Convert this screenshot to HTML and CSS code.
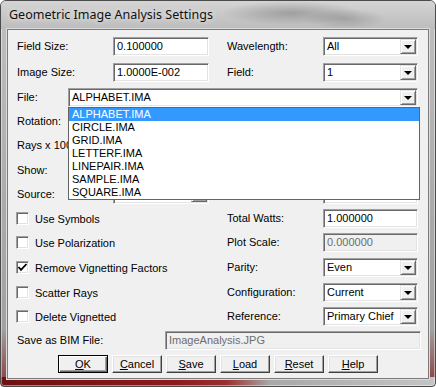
FILE: index.html
```html
<!DOCTYPE html>
<html lang="en">
<head>
    <meta charset="UTF-8">
    <title>Geometric Image Analysis Settings</title>
    <link rel="stylesheet" href="styles.css">
</head>
<body>
    <div class="window">
        <div class="titlebar">Geometric Image Analysis Settings</div>
        <div class="client">
            <div class="form">
                <div class="row">
                    <span class="lbl">Field Size:</span>
                    <div class="field">0.100000</div>
                    <span></span>
                    <span class="lbl">Wavelength:</span>
                    <div class="combo"><span class="combo-text">All</span><span class="drop-btn"></span></div>
                </div>

                <div class="row">
                    <span class="lbl">Image Size:</span>
                    <div class="field">1.0000E-002</div>
                    <span></span>
                    <span class="lbl">Field:</span>
                    <div class="combo"><span class="combo-text">1</span><span class="drop-btn"></span></div>
                </div>

                <div class="row row-file">
                    <span class="lbl">File:</span>
                    <div class="combo combo-open">
                        <span class="combo-text">ALPHABET.IMA</span><span class="drop-btn"></span>
                        <ul class="droplist">
                            <li class="selected">ALPHABET.IMA</li>
                            <li>CIRCLE.IMA</li>
                            <li>GRID.IMA</li>
                            <li>LETTERF.IMA</li>
                            <li>LINEPAIR.IMA</li>
                            <li>SAMPLE.IMA</li>
                            <li>SQUARE.IMA</li>
                        </ul>
                    </div>
                </div>

                <!-- these rows sit under the open list -->
                <div class="row">
                    <span class="lbl">Rotation:</span>
                    <div class="field"></div>
                    <span></span>
                    <span class="lbl"></span>
                    <div class="field"></div>
                </div>

                <div class="row">
                    <span class="lbl">Rays x 1000:</span>
                    <div class="field"></div>
                    <span></span>
                    <span class="lbl"></span>
                    <div class="combo"><span class="combo-text"></span><span class="drop-btn"></span></div>
                </div>

                <div class="row">
                    <span class="lbl">Show:</span>
                    <div class="combo"><span class="combo-text"></span><span class="drop-btn"></span></div>
                    <span></span>
                    <span class="lbl"></span>
                    <div class="combo"><span class="combo-text"></span><span class="drop-btn"></span></div>
                </div>

                <div class="row">
                    <span class="lbl">Source:</span>
                    <div class="combo"><span class="combo-text"></span><span class="drop-btn"></span></div>
                    <span></span>
                    <span class="lbl"></span>
                    <div class="field"></div>
                </div>

                <div class="row">
                    <label class="check"><span class="box"></span>Use Symbols</label>
                    <span class="lbl">Total Watts:</span>
                    <div class="field">1.000000</div>
                </div>

                <div class="row">
                    <label class="check"><span class="box"></span>Use Polarization</label>
                    <span class="lbl">Plot Scale:</span>
                    <div class="field disabled">0.000000</div>
                </div>

                <div class="row">
                    <label class="check"><span class="box"><svg width="11" height="11" viewBox="0 0 11 11"><polyline points="1.5,5 4,7.8 9.5,2" fill="none" stroke="#000" stroke-width="1.8"/></svg></span>Remove Vignetting Factors</label>
                    <span class="lbl">Parity:</span>
                    <div class="combo"><span class="combo-text">Even</span><span class="drop-btn"></span></div>
                </div>

                <div class="row">
                    <label class="check"><span class="box"></span>Scatter Rays</label>
                    <span class="lbl">Configuration:</span>
                    <div class="combo"><span class="combo-text">Current</span><span class="drop-btn"></span></div>
                </div>

                <div class="row">
                    <label class="check"><span class="box"></span>Delete Vignetted</label>
                    <span class="lbl">Reference:</span>
                    <div class="combo"><span class="combo-text">Primary Chief</span><span class="drop-btn"></span></div>
                </div>

                <div class="row row-save">
                    <span class="lbl">Save as BIM File:</span>
                    <div class="field disabled">ImageAnalysis.JPG</div>
                </div>

                <div class="buttons">
                    <button class="btn default"><u>O</u>K</button>
                    <button class="btn"><u>C</u>ancel</button>
                    <button class="btn"><u>S</u>ave</button>
                    <button class="btn"><u>L</u>oad</button>
                    <button class="btn"><u>R</u>eset</button>
                    <button class="btn"><u>H</u>elp</button>
                </div>
            </div>
        </div>
    </div>
</body>
</html>
```

FILE: styles.css
```css
body {
    margin: 0;
    background-color: #fff;
    font-family: 'Liberation Sans', Arial, sans-serif;
    font-size: 11px;
    color: #000;
}

.window {
    width: 436px;
    height: 387px;
    box-sizing: border-box;
    padding: 0 6px 7px;
    border: 1px solid #4b4b4b;
    border-radius: 6px 6px 4px 4px;
    background:
        linear-gradient(to right, #6e1010 0, #8d1a1a 40%, #9a3030 52%, #a8a8a8 62%, #c4c4c4 100%) bottom / 100% 9px no-repeat,
        linear-gradient(to bottom, #d0d0d0, #bdbdbd 30px, #aaaaaa 55%, #a2a2a2 85%, #8a3a3a 100%);
    box-shadow: inset 0 0 0 1px rgba(255, 255, 255, 0.45);
    overflow: hidden;
}

.titlebar {
    height: 28px;
    line-height: 28px;
    margin: 0 -6px;
    padding-left: 8px;
    font-family: 'Noto Sans', 'Liberation Sans', sans-serif;
    font-size: 12.5px;
    color: #111;
    text-shadow: 0 0 6px rgba(255, 255, 255, 0.9);
    background:
        radial-gradient(ellipse 70px 12px at 290px 12px, rgba(80, 80, 80, 0.35), transparent),
        radial-gradient(ellipse 40px 10px at 345px 18px, rgba(90, 90, 90, 0.3), transparent),
        linear-gradient(to bottom, #d4d4d4, #bcbcbc);
}

.client {
    height: 350px;
    box-sizing: border-box;
    border: 1px solid #7b7b7b;
    background-color: #f0f0f0;
    padding: 7px 0 0 9px;
    box-shadow: 0 0 0 1px #dcdcdc;
}

.form {
    display: grid;
    grid-template-rows: 26px 25px 24px 24px 25px 24px 24px 24px 25px 25px 24px 24px 24px auto;
}

.row {
    display: grid;
    grid-template-columns: 96px 96px 18px 96px 95px;
    align-items: start;
}

.row-file {
    grid-template-columns: 51px 350px;
}

.row-save {
    grid-template-columns: 148px 256px;
}

.lbl {
    line-height: 19px;
    white-space: nowrap;
}

.field, .combo {
    position: relative;
    height: 19px;
    box-sizing: border-box;
    border: 1px solid;
    border-color: #a0a0a0 #fff #fff #a0a0a0;
    box-shadow: inset 1px 1px #696969, inset -1px -1px #e3e3e3;
    background-color: #fff;
    padding: 0 3px;
    line-height: 17px;
    white-space: nowrap;
}

.field.disabled {
    background-color: #f0f0f0;
    color: #6d6d6d;
}

.combo-text {
    display: block;
}

.drop-btn {
    position: absolute;
    top: 1px;
    right: 1px;
    width: 16px;
    height: 15px;
    box-sizing: border-box;
    background-color: #f0f0f0;
    border: 1px solid;
    border-color: #e3e3e3 #696969 #696969 #e3e3e3;
    box-shadow: inset 1px 1px #fff, inset -1px -1px #a0a0a0;
}

.drop-btn::after {
    content: '';
    position: absolute;
    left: 3px;
    top: 5px;
    border-left: 4px solid transparent;
    border-right: 4px solid transparent;
    border-top: 4px solid #000;
}

.droplist {
    position: absolute;
    top: 18px;
    left: -1px;
    width: 352px;
    box-sizing: border-box;
    margin: 0;
    padding: 0;
    list-style: none;
    background-color: #fff;
    border: 1px solid #646464;
    z-index: 2;
}

.droplist li {
    height: 13px;
    line-height: 13px;
    padding-left: 3px;
}

.droplist li.selected {
    background-color: #3399ff;
    color: #fff;
}

.check {
    grid-column: span 3;
    display: flex;
    align-items: center;
    gap: 6px;
    height: 19px;
    margin-left: -1px;
}

.box {
    width: 13px;
    height: 13px;
    box-sizing: border-box;
    border: 1px solid;
    border-color: #a0a0a0 #fff #fff #a0a0a0;
    box-shadow: inset 1px 1px #696969, inset -1px -1px #e3e3e3;
    background-color: #fff;
    display: flex;
    align-items: center;
    justify-content: center;
}

.buttons {
    display: flex;
    gap: 4px;
    margin-left: 41px;
}

.btn {
    width: 50px;
    height: 18px;
    padding: 0;
    font-family: inherit;
    font-size: 11px;
    color: #000;
    background-color: #f0f0f0;
    border: 1px solid;
    border-color: #fff #404040 #404040 #fff;
    box-shadow: inset -1px -1px #a0a0a0, inset 1px 1px #e3e3e3;
}

.btn.default {
    border-color: #000;
    box-shadow: inset 1px 1px #fff, inset -1px -1px #696969, inset -2px -2px #a0a0a0;
}
```
